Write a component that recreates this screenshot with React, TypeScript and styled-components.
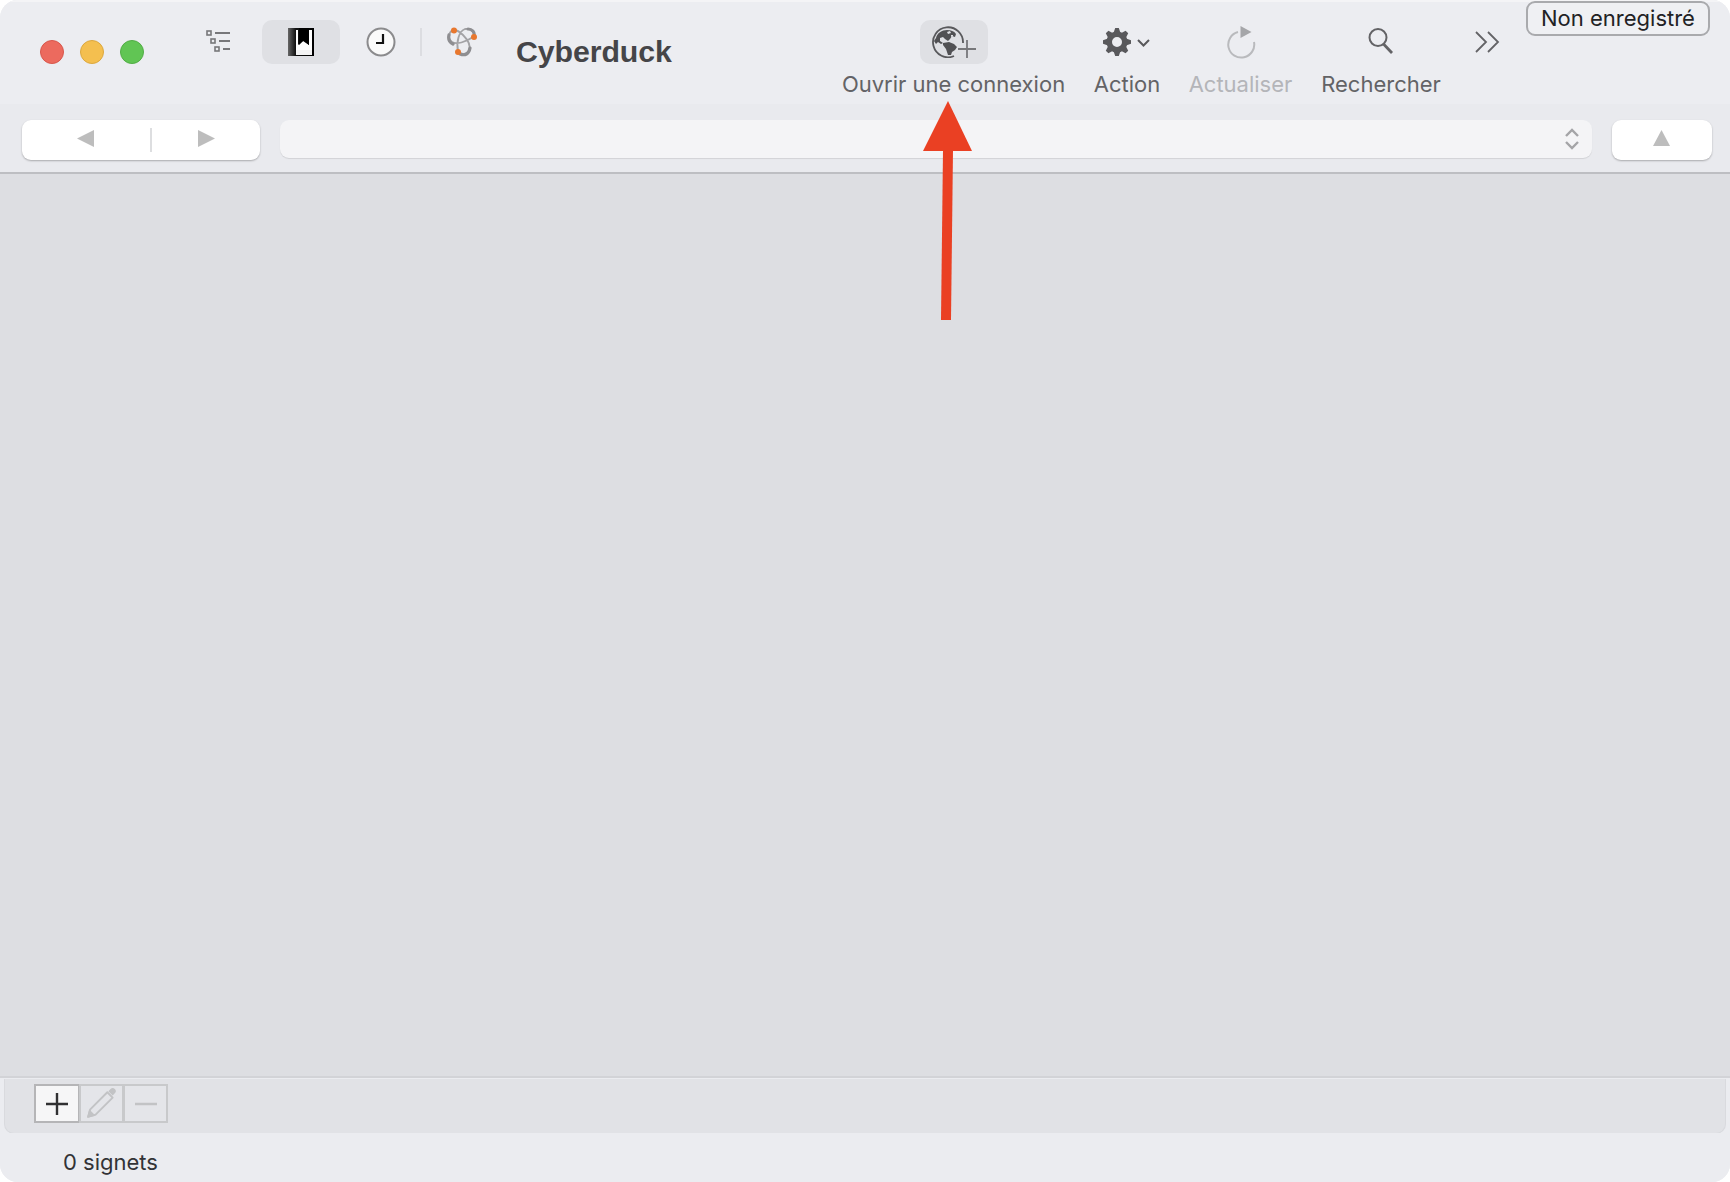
import React from "react";
import styled, { createGlobalStyle } from "styled-components";

const Global = createGlobalStyle`
  html, body { margin: 0; padding: 0; background: #fff; }
  #root { width: 1730px; height: 1182px; }
`;

const sans = `Inter, "Liberation Sans", Arial, sans-serif`;

const Window = styled.div`
  position: relative;
  width: 1730px;
  height: 1182px;
  display: flex;
  flex-direction: column;
  border-radius: 18px;
  overflow: hidden;
  background: #ebecf0;
  font-family: ${sans};
`;

const TitleBar = styled.header`
  position: relative;
  height: 104px;
  flex: none;
  display: flex;
  align-items: flex-start;
  padding: 0 230px 0 40px;
  box-sizing: border-box;
  background: #ecedf1;
  border-top: 2px solid #f4f4f6;
`;

const Lights = styled.div`
  display: flex;
  gap: 16px;
  margin-top: 38px;
  margin-right: 32px;
`;

const Light = styled.span<{ $c: string; $b: string }>`
  width: 24px;
  height: 24px;
  border-radius: 50%;
  box-sizing: border-box;
  background: ${(p) => p.$c};
  border: 1px solid ${(p) => p.$b};
`;

const Tabs = styled.nav`
  display: flex;
  gap: 2px;
  margin-top: 18px;
  align-items: center;
`;

const Tab = styled.div<{ $w: number; $active?: boolean }>`
  width: ${(p) => p.$w}px;
  height: 44px;
  border-radius: 10px;
  display: flex;
  align-items: center;
  justify-content: center;
  background: ${(p) => (p.$active ? "#dfe0e4" : "transparent")};
`;

const TabDivider = styled.span`
  width: 2px;
  height: 28px;
  margin-left: -2px;
  background: #dcdde1;
`;

const Title = styled.h1`
  margin: 33px 0 0 16px;
  font: 700 30.3px/34px "Liberation Sans", Arial, sans-serif;
  color: #454548;
  letter-spacing: -0.1px;
`;

const Tools = styled.div`
  margin-left: auto;
  display: flex;
  gap: 29px;
  margin-top: 18px;
`;

const Tool = styled.div<{ $w: number; $disabled?: boolean }>`
  width: ${(p) => p.$w}px;
  display: flex;
  flex-direction: column;
  align-items: center;
  color: ${(p) => (p.$disabled ? "#b4b5b9" : "#636366")};
`;

const ToolIcon = styled.div<{ $active?: boolean }>`
  width: 68px;
  height: 44px;
  border-radius: 10px;
  display: flex;
  align-items: center;
  justify-content: center;
  background: ${(p) => (p.$active ? "#dfe0e4" : "transparent")};
`;

const ToolLabel = styled.span`
  margin-top: 7px;
  font-size: 22px;
  line-height: 26px;
  white-space: nowrap;
`;

const Overflow = styled.div`
  width: 25px;
  height: 44px;
  margin-left: 5px;
  display: flex;
  align-items: center;
  justify-content: center;
`;

const LicenseBadge = styled.button`
  position: absolute;
  top: -1px;
  left: 1526px;
  width: 184px;
  height: 35px;
  padding: 0 0 2px;
  box-sizing: border-box;
  border: 2px solid #a9aaad;
  border-radius: 9px;
  background: #eff0f3;
  font-family: ${sans};
  font-size: 22px;
  line-height: 28px;
  color: #222224;
`;

const NavBar = styled.div`
  height: 68px;
  flex: none;
  box-sizing: border-box;
  display: flex;
  align-items: flex-start;
  gap: 20px;
  padding: 16px 18px 0 22px;
  background: #e9eaee;
`;

const NavSegment = styled.div`
  width: 238px;
  height: 40px;
  flex: none;
  display: grid;
  grid-template-columns: 128px 2px 1fr;
  align-items: center;
  background: #fff;
  border-radius: 9px;
  box-shadow: 0 1px 2px rgba(0, 0, 0, 0.28);
`;

const NavCell = styled.div<{ $pad: string }>`
  display: flex;
  align-items: center;
  justify-content: center;
  padding: ${(p) => p.$pad};
  height: 36px;
`;

const NavDivider = styled.span`
  height: 24px;
  background: #dddee0;
`;

const PathCombo = styled.div`
  flex: 1;
  height: 38px;
  display: flex;
  align-items: center;
  justify-content: flex-end;
  padding-right: 12px;
  background: #f4f4f6;
  border-radius: 9px;
  box-shadow: 0 1px 1px rgba(0, 0, 0, 0.1);
`;

const UpButton = styled.div`
  width: 100px;
  height: 40px;
  flex: none;
  display: flex;
  align-items: center;
  justify-content: center;
  padding: 0 2px 4px 0;
  box-sizing: border-box;
  background: #fff;
  border-radius: 9px;
  box-shadow: 0 1px 2px rgba(0, 0, 0, 0.28);
`;

const Main = styled.main`
  flex: 1;
  background: #dddee2;
  border-top: 2px solid #bdbec2;
`;

const BottomArea = styled.div`
  flex: none;
  height: 57px;
  box-sizing: border-box;
  padding: 1px 4px 0;
  background: #ebecf0;
  border-top: 2px solid #d2d3d7;
`;

const ActionPanel = styled.div`
  height: 55px;
  box-sizing: border-box;
  display: flex;
  padding: 5px 0 0 30px;
  background: #e1e2e6;
  border: 1px solid #d9dade;
  border-top: none;
  border-radius: 0 0 10px 10px;
`;

const SquareButton = styled.div<{ $primary?: boolean }>`
  width: ${(p) => (p.$primary ? "46px" : "45px")};
  height: 39px;
  box-sizing: border-box;
  display: flex;
  align-items: center;
  justify-content: center;
  margin-left: -1px;
  background: ${(p) => (p.$primary ? "#f6f6f7" : "#e4e5e9")};
  border: 2px solid ${(p) => (p.$primary ? "#b5b5b7" : "#c8c9cb")};
`;

const StatusBar = styled.footer`
  flex: none;
  height: 49px;
  box-sizing: border-box;
  padding: 16px 0 0 63px;
  font-size: 22px;
  line-height: 26px;
  color: #333336;
  background: #ebecf0;
`;

const Annotation = styled.svg`
  position: absolute;
  left: 915px;
  top: 95px;
  pointer-events: none;
`;

const ListIcon = () => (
  <svg width="24" height="24" viewBox="0 0 24 24" fill="none" stroke="#77777a" strokeWidth="1.6">
    <rect x="1" y="1" width="4" height="4" />
    <rect x="5" y="9" width="4" height="4" />
    <rect x="9" y="17" width="4" height="4" />
    <path d="M9 3h15M13 11h11M17 19h7" strokeWidth="2" />
  </svg>
);

const BookmarkIcon = () => (
  <svg width="26" height="28" viewBox="0 0 26 28">
    <defs>
      <linearGradient id="bmShade" x1="0" x2="1" y1="0" y2="0">
        <stop offset="0" stopColor="#666" />
        <stop offset="0.3" stopColor="#111" />
        <stop offset="1" stopColor="#000" />
      </linearGradient>
    </defs>
    <rect width="26" height="28" fill="url(#bmShade)" />
    <path d="M8 2h2v15l5-4 6 4V2h3v25H8z" fill="#fff" />
    <path d="M11 0h10v17l-5.500-4.500L11 17z" fill="#000" />
    <rect x="8" y="22" width="16" height="5" fill="#f4f4f4" />
  </svg>
);

const ClockIcon = () => (
  <svg width="30" height="30" viewBox="0 0 30 30">
    <circle cx="15" cy="15" r="13.500" fill="#fafafa" stroke="#8b8b8d" strokeWidth="2" />
    <path d="M17 7v9h-7" fill="none" stroke="#111" strokeWidth="2.200" />
  </svg>
);

const BonjourIcon = () => (
  <svg width="32" height="30" viewBox="0 0 32 30" fill="none">
    <path
      d="M8 3C3 4 1 11 6 15c4 3 14 0 21-5 3-4-2-9-8-8-6 2-9 13-7 22 2 4 9 4 11-1 2-5-2-11-6-15-3-3-6-5-9-5z"
      stroke="#a3a3a6"
      strokeWidth="1.800"
    />
    <path d="M3 8c-1 4 0 7 4 9M22 2c4 0 7 3 6 7M14 27c5 2 9 0 10-6" stroke="#8e8e91" strokeWidth="3.200" strokeLinecap="round" />
    <circle cx="8" cy="3.500" r="3" fill="#e8772e" />
    <circle cx="28" cy="10" r="3" fill="#e8772e" />
    <circle cx="12" cy="25" r="3" fill="#e8772e" />
  </svg>
);

const GlobeIcon = () => (
  <svg width="44" height="32" viewBox="0 0 44 32" fill="none">
    <path d="M31 17A15 15 0 1 0 22 30" stroke="#59595c" strokeWidth="1.800" />
    <path
      d="M4 12C5 7 10 4 15 4c4 0 7 1 9 4l-1 3-3-1-2 3-2 2-3-2-2-2-3 1 0 3 3 2-2 1-3-2-2 2-2-3z"
      fill="#515154"
    />
    <path d="M11 17l6-1 5 2 3 3-2 3-3 2-1 3-3 0-2-6-3-4z" fill="#515154" />
    <path d="M15 6l3-1 1 2-3 1zM19 9l2 0 0 1-2 1z" fill="#dfe0e4" />
    <path d="M26 23h18M35 14v18" stroke="#77777a" strokeWidth="1.800" />
  </svg>
);

const GearIcon = () => (
  <svg width="48" height="30" viewBox="0 0 48 30">
    <g transform="translate(14 15)" fill="#59595c">
      {[0, 45, 90, 135, 180, 225, 270, 315].map((a) => (
        <polygon key={a} points="-3.500,-9 -1.800,-14 1.800,-14 3.500,-9" transform={`rotate(${a})`} />
      ))}
      <path fillRule="evenodd" d="M0-10.500a10.500 10.500 0 1 0 0 21a10.500 10.500 0 1 0 0-21zM0-5a5 5 0 1 1 0 10a5 5 0 1 1 0-10z" />
    </g>
    <path d="M35 13l5.500 5.500L46 13" fill="none" stroke="#59595c" strokeWidth="2" />
  </svg>
);

const RefreshIcon = () => (
  <svg width="30" height="34" viewBox="0 0 30 34" fill="none">
    <path d="M12 7A13 13 0 1 0 28 17" stroke="#b9babd" strokeWidth="2" />
    <path d="M14.500 1l11 6-11 6z" fill="#a5a6a9" />
  </svg>
);

const SearchIcon = () => (
  <svg width="26" height="28" viewBox="0 0 26 28" fill="none" stroke="#636366">
    <circle cx="10" cy="9.500" r="8.500" strokeWidth="2" />
    <path d="M15.500 16l8.500 9" strokeWidth="2.800" />
  </svg>
);

const ChevronsIcon = () => (
  <svg width="25" height="22" viewBox="0 0 25 22" fill="none" stroke="#636366" strokeWidth="1.800">
    <path d="M1 1l10 10L1 21M13 1l10 10-10 10" />
  </svg>
);

const Triangle = ({ dir }: { dir: "left" | "right" | "up" }) => {
  const pts = { left: "17,0 17,17 0,8.500", right: "0,0 0,17 17,8.500", up: "8.500,0 17,16 0,16" }[dir];
  return (
    <svg width="17" height="17" viewBox="0 0 17 17">
      <polygon points={pts} fill="#bdbdbd" />
    </svg>
  );
};

const ComboArrows = () => (
  <svg width="16" height="24" viewBox="0 0 16 24" fill="none" stroke="#a4a4a7" strokeWidth="2.400">
    <path d="M2 9l6-6 6 6M2 15l6 6 6-6" />
  </svg>
);

const PencilIcon = () => (
  <svg width="32" height="32" viewBox="1 0 30 30" fill="none">
    <path d="M3 27l2-7L21 4l5 5L10 25z" stroke="#c2c3c5" strokeWidth="1.800" strokeLinejoin="round" />
    <path d="M2 28l2-8 6 6z" fill="#c2c3c5" />
    <path d="M22 3l2-2a2.500 2.500 0 0 1 4 4l-2 2z" fill="#c2c3c5" />
  </svg>
);

const PlusIcon = () => (
  <svg width="22" height="22" viewBox="0 0 22 22" stroke="#303032" strokeWidth="2.400">
    <path d="M0 11h22M11 0v22" />
  </svg>
);

const MinusIcon = () => (
  <svg width="22" height="4" viewBox="0 0 22 4" stroke="#c2c3c5" strokeWidth="2.400">
    <path d="M0 2h22" />
  </svg>
);

export default function App() {
  return (
    <>
      <Global />
      <Window>
        <TitleBar>
          <Lights>
            <Light $c="#ec6a5e" $b="#d8574c" />
            <Light $c="#f4bf4f" $b="#dca83f" />
            <Light $c="#61c554" $b="#52ad46" />
          </Lights>
          <Tabs>
            <Tab $w={84}><ListIcon /></Tab>
            <Tab $w={78} $active><BookmarkIcon /></Tab>
            <Tab $w={78}><ClockIcon /></Tab>
            <TabDivider />
            <Tab $w={76}><BonjourIcon /></Tab>
          </Tabs>
          <Title>Cyberduck</Title>
          <Tools>
            <Tool $w={223}>
              <ToolIcon $active><GlobeIcon /></ToolIcon>
              <ToolLabel>Ouvrir une connexion</ToolLabel>
            </Tool>
            <Tool $w={66}>
              <ToolIcon><GearIcon /></ToolIcon>
              <ToolLabel>Action</ToolLabel>
            </Tool>
            <Tool $w={103} $disabled>
              <ToolIcon><RefreshIcon /></ToolIcon>
              <ToolLabel>Actualiser</ToolLabel>
            </Tool>
            <Tool $w={120}>
              <ToolIcon><SearchIcon /></ToolIcon>
              <ToolLabel>Rechercher</ToolLabel>
            </Tool>
            <Overflow><ChevronsIcon /></Overflow>
          </Tools>
          <LicenseBadge>Non enregistré</LicenseBadge>
        </TitleBar>
        <NavBar>
          <NavSegment>
            <NavCell $pad="0 2px 4px 0"><Triangle dir="left" /></NavCell>
            <NavDivider />
            <NavCell $pad="0 0 4px 0"><Triangle dir="right" /></NavCell>
          </NavSegment>
          <PathCombo><ComboArrows /></PathCombo>
          <UpButton><Triangle dir="up" /></UpButton>
        </NavBar>
        <Main />
        <BottomArea>
          <ActionPanel>
            <SquareButton $primary><PlusIcon /></SquareButton>
            <SquareButton><PencilIcon /></SquareButton>
            <SquareButton><MinusIcon /></SquareButton>
          </ActionPanel>
        </BottomArea>
        <StatusBar>0 signets</StatusBar>
        <Annotation width="70" height="230" viewBox="0 0 70 230">
          <polygon points="33,6 8,56 57,56" fill="#ea4023" />
          <polygon points="28,55 38,55 36,225 26,225" fill="#ea4023" />
        </Annotation>
      </Window>
    </>
  );
}
